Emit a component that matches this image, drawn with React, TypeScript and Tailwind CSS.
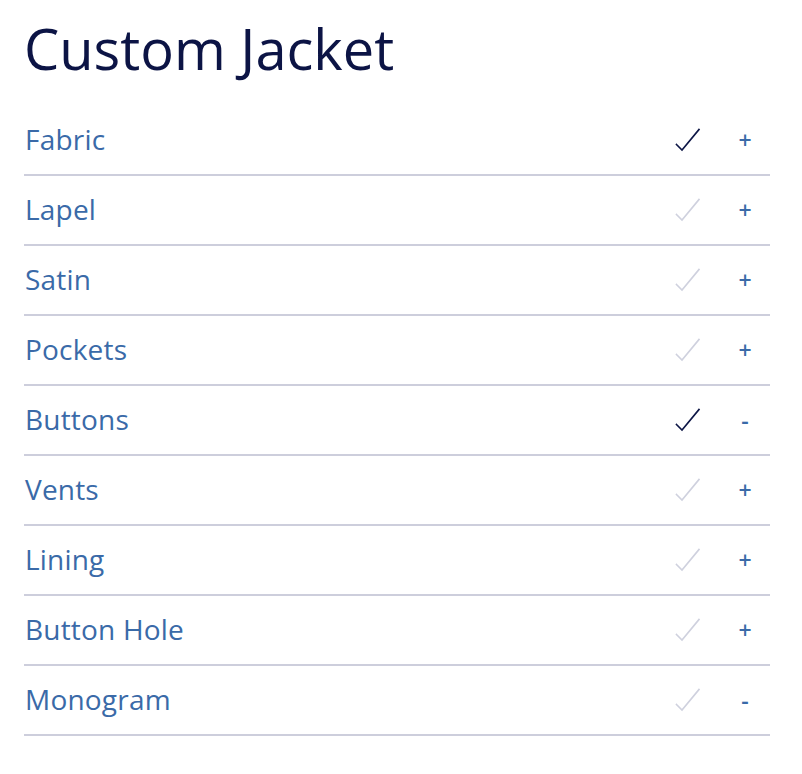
import React from "react";

const rows: { name: string; done: boolean; open: boolean }[] = [
  { name: "Fabric", done: true, open: false },
  { name: "Lapel", done: false, open: false },
  { name: "Satin", done: false, open: false },
  { name: "Pockets", done: false, open: false },
  { name: "Buttons", done: true, open: true },
  { name: "Vents", done: false, open: false },
  { name: "Lining", done: false, open: false },
  { name: "Button Hole", done: false, open: false },
  { name: "Monogram", done: false, open: true },
];

function Check({ done }: { done: boolean }) {
  return (
    <svg width="26" height="26" viewBox="0 0 26 26" fill="none">
      <path
        d="M1.5 17.5 L7 23 L24 2.5"
        stroke={done ? "#0d1646" : "#cfd1de"}
        strokeWidth="1.6"
        strokeLinecap="square"
      />
    </svg>
  );
}

export default function App() {
  return (
    <div
      className="w-[802px] h-[774px] bg-white px-[24px]"
      style={{ fontFamily: "'Open Sans', 'Noto Sans', sans-serif" }}
    >
      <h1 className="h-[106px] pt-[10px] text-[56px] leading-[76px] text-[#0c1445] font-normal">
        Custom Jacket
      </h1>
      <div className="w-[746px]">
        {rows.map((r) => (
          <div
            key={r.name}
            className="h-[70px] flex items-center border-b-2 border-[#cdcedc]"
          >
            <div className="flex-1 pl-[1px] -mt-[2px] text-[28px] tracking-[0.2px] text-[#3a6aa8]">
              {r.name}
            </div>
            <div className="w-[26px] h-[26px] mr-[31px]">
              <Check done={r.done} />
            </div>
            <div className="w-[26px] mr-[12px] text-center text-[23px] text-[#3a6aa8] font-semibold">
              {r.open ? "-" : "+"}
            </div>
          </div>
        ))}
      </div>
    </div>
  );
}
